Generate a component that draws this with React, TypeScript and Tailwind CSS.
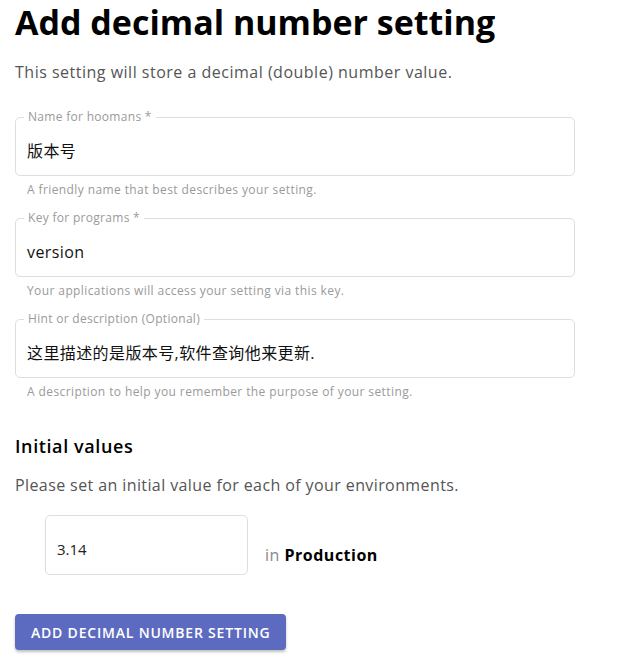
import { type FC } from 'react';

const font = { fontFamily: '"Open Sans", "Noto Sans CJK SC", sans-serif' };

interface FieldProps {
  label: string;
  value: string;
  helper: string;
}

const OutlinedField: FC<FieldProps> = ({ label, value, helper }) => {
  return (
    <div className="w-[560px]">
      <div className="relative h-[59px] border border-[#dedede] rounded-[5px] pl-[11px] pt-[23px]">
        <span className="absolute top-[-8px] left-[8px] px-[4px] bg-white text-[12px] leading-[14px] tracking-[0.3px] text-[#9a9a9a]">
          {label}
        </span>
        <div className="text-[16px] leading-[20px] tracking-[0.4px] text-[#111]">{value}</div>
      </div>
      <p className="pl-[12px] mt-[6px] text-[12px] leading-[16px] tracking-[0.4px] text-[#9a9a9a]">{helper}</p>
    </div>
  );
};

export default function App() {
  return (
    <div className="w-[631px] h-[660px] bg-white px-[15px] overflow-hidden" style={font}>
      <h1 className="text-[34px] leading-[44px] font-bold text-black">
        Add decimal number setting
      </h1>
      <p className="mt-[17px] text-[16px] leading-[22px] tracking-[0.5px] text-[#555]">
        This setting will store a decimal (double) number value.
      </p>

      <div className="mt-[34px] flex flex-col gap-[20px]">
        <OutlinedField label="Name for hoomans *" value="版本号" helper="A friendly name that best describes your setting." />
        <OutlinedField label="Key for programs *" value="version" helper="Your applications will access your setting via this key." />
        <OutlinedField
          label="Hint or description (Optional)"
          value="这里描述的是版本号,软件查询他来更新."
          helper="A description to help you remember the purpose of your setting."
        />
      </div>

      <h2 className="mt-[34px] text-[18px] leading-[24px] font-semibold tracking-[0.6px] text-black">Initial values</h2>
      <p className="mt-[16px] text-[16px] leading-[22px] tracking-[0.4px] text-[#555]">
        Please set an initial value for each of your environments.
      </p>

      <div className="mt-[19px] pl-[30px] flex items-end gap-[17px]">
        <div className="w-[203px] h-[60px] border border-[#dedede] rounded-[5px] pl-[11px] pt-[23px] text-[15px] leading-[20px] text-[#222]">
          3.14
        </div>
        <div className="pb-[10px] text-[16px] leading-[20px] tracking-[0.5px]">
          <span className="text-[#888]">in </span>
          <span className="font-bold text-black">Production</span>
        </div>
      </div>

      <button className="mt-[39px] h-[36px] px-[16px] rounded-[4px] bg-[#5c6bc0] text-white text-[14px] font-semibold uppercase tracking-[0.8px] shadow-[0_2px_3px_rgba(0,0,0,0.25)]">
        Add decimal number setting
      </button>
    </div>
  );
}
